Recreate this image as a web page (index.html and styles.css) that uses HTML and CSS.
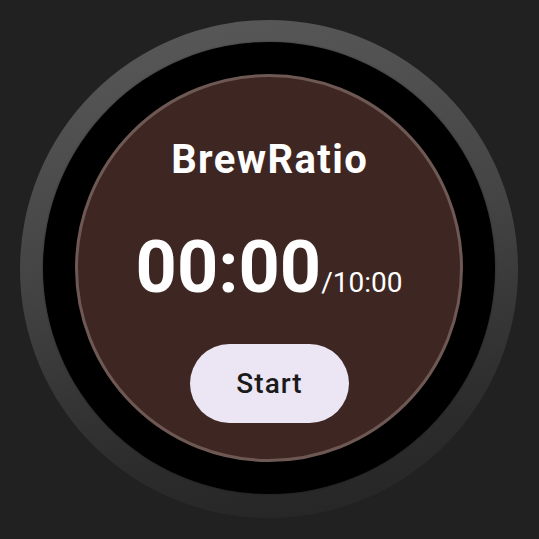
FILE: index.html
```html
<!DOCTYPE html>
<html lang="en">
<head>
<meta charset="utf-8">
<title>BrewRatio</title>
<link rel="stylesheet" href="styles.css">
</head>
<body>
  <div class="bezel">
    <div class="screen">
      <main class="face">
        <h1 class="title">BrewRatio</h1>
        <div class="timer">
          <span class="elapsed">00:00</span><span class="total">/10:00</span>
        </div>
        <button class="start" type="button">Start</button>
      </main>
    </div>
  </div>
</body>
</html>
```

FILE: styles.css
```css
html, body {
  margin: 0;
  padding: 0;
}

body {
  width: 539px;
  height: 539px;
  background: #212121;
  font-family: Roboto, "Noto Sans", sans-serif;
  padding: 20px 0 0 20px;
  box-sizing: border-box;
}

/* outer watch bezel, lit from the top */
.bezel {
  width: 498px;
  height: 498px;
  border-radius: 50%;
  padding: 22px 23px 24px 23px;
  box-sizing: border-box;
  background: linear-gradient(170deg, #5a5a5a 0%, #444444 45%, #2c2c2c 80%, #242424 100%);
}

.screen {
  width: 452px;
  height: 452px;
  border-radius: 50%;
  background: #000;
  padding: 32px;
  box-sizing: border-box;
  box-shadow: 0 0 2px rgba(0, 0, 0, 0.45);
}

.face {
  width: 388px;
  height: 388px;
  border-radius: 50%;
  border: 3px solid #6e5853;
  background: #3e2723;
  box-sizing: border-box;
  display: flex;
  flex-direction: column;
  align-items: center;
  padding-top: 63px;
  color: #fff;
}

.title {
  margin: 0;
  font-size: 40px;
  line-height: 40px;
  font-weight: 700;
  letter-spacing: 1.4px;
  padding-left: 1.4px;
}

.timer {
  margin-top: 52px;
  display: flex;
  align-items: baseline;
  line-height: 72px;
  height: 72px;
}

.elapsed {
  font-size: 72px;
  font-weight: 700;
}

.total {
  font-size: 28px;
  font-weight: 400;
}

.start {
  margin-top: 40px;
  width: 159px;
  height: 79px;
  border: none;
  border-radius: 40px;
  background: #ece6f4;
  color: #1a1a1a;
  font-family: Roboto, "Noto Sans", sans-serif;
  font-size: 28px;
  font-weight: 500;
  letter-spacing: 1px;
  padding: 0 0 0 1px;
}
```
